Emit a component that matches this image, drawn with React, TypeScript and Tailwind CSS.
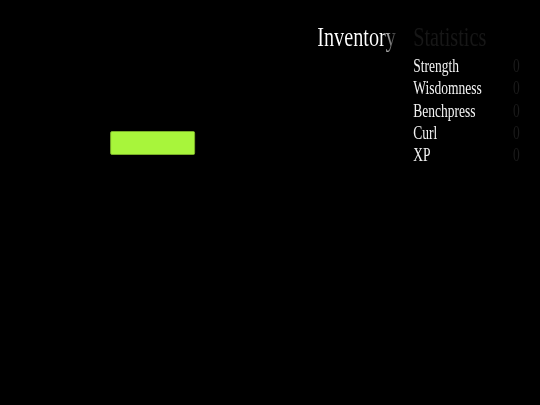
import React from "react";

const stats = [
  { label: "Strength", value: 0 },
  { label: "Wisdomness", value: 0 },
  { label: "Benchpress", value: 0 },
  { label: "Curl", value: 0 },
  { label: "XP", value: 0 },
];

export default function App() {
  return (
    <div className="w-[540px] h-[405px] overflow-hidden bg-black">
      <div
        className="w-[720px] h-[405px] origin-top-left scale-x-75 flex flex-row text-white"
        style={{ fontFamily: '"Liberation Serif", "Times New Roman", serif' }}
      >
        <div className="w-[423px] shrink-0 pl-[147px] pt-[131px]">
          <div className="w-[113px] h-[24px] bg-[#a8f53b] border border-[#7fb52c] rounded-[2px]" />
        </div>
        <div className="pt-[22px] shrink-0">
          <div className="text-[27px] leading-[30px] bg-linear-to-r from-white from-[82%] to-[#303030] bg-clip-text text-transparent">
            Inventory
          </div>
        </div>
        <div className="pt-[22px] pl-[23px] flex-1">
          <div className="text-[27px] leading-[30px] text-[#171717]">Statistics</div>
          <div className="grid grid-cols-[133px_1fr] mt-[3px] text-[18px] leading-[22.3px]">
            {stats.map((s) => (
              <React.Fragment key={s.label}>
                <div className="text-[#f2f2f2]">{s.label}</div>
                <div className="text-[#1b1b1b]">{s.value}</div>
              </React.Fragment>
            ))}
          </div>
        </div>
      </div>
    </div>
  );
}
